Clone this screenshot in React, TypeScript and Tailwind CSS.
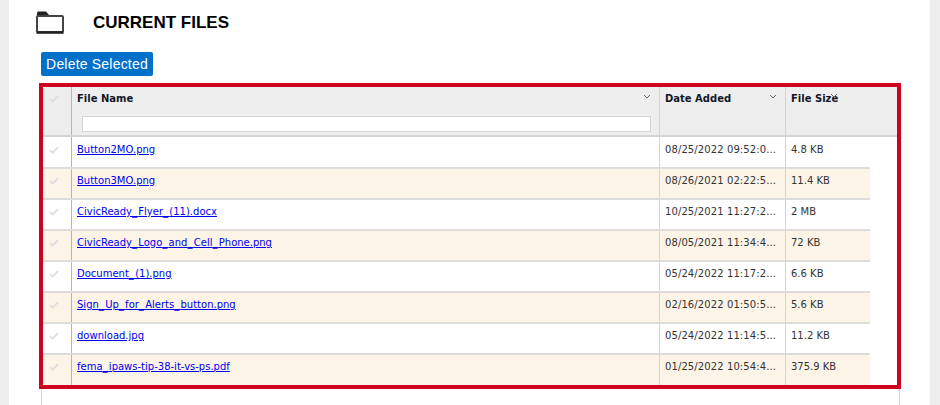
const files = [
  { name: "Button2MO.png", date: "08/25/2022 09:52:0...", size: "4.8 KB" },
  { name: "Button3MO.png", date: "08/26/2021 02:22:5...", size: "11.4 KB" },
  { name: "CivicReady_Flyer_(11).docx", date: "10/25/2021 11:27:2...", size: "2 MB" },
  { name: "CivicReady_Logo_and_Cell_Phone.png", date: "08/05/2021 11:34:4...", size: "72 KB" },
  { name: "Document_(1).png", date: "05/24/2022 11:17:2...", size: "6.6 KB" },
  { name: "Sign_Up_for_Alerts_button.png", date: "02/16/2022 01:50:5...", size: "5.6 KB" },
  { name: "download.jpg", date: "05/24/2022 11:14:5...", size: "11.2 KB" },
  { name: "fema_ipaws-tip-38-it-vs-ps.pdf", date: "01/25/2022 10:54:4...", size: "375.9 KB" },
];

function Check() {
  return (
    <svg width="10" height="8" viewBox="0 0 10 8" fill="none">
      <path d="M1 4.2 3.6 6.6 9 1.2" stroke="#dddddd" strokeWidth="1.8" />
    </svg>
  );
}

function Chevron() {
  return (
    <svg width="8" height="5" viewBox="0 0 8 5" fill="none">
      <path d="M1 1 4 4 7 1" stroke="#666" strokeWidth="1" />
    </svg>
  );
}

function FolderIcon() {
  return (
    <svg width="28" height="23" viewBox="0 0 28 23" fill="none">
      <path d="M1 4.5V2a1.5 1.5 0 0 1 1.5-1.5H10l3 3.5v1.5H1Z" fill="#222222" />
      <rect x="1" y="5" width="26" height="16" rx="1" stroke="#444444" strokeWidth="2" />
      <path d="M0.5 21.5h27" stroke="#222222" strokeWidth="2.6" />
    </svg>
  );
}

// underscores are wider in the original font
function FileName({ name }: { name: string }) {
  const parts = name.split("_");
  return (
    <>
      {parts.map((p, i) => (
        <span key={i}>
          {p}
          {i < parts.length - 1 && <span className="tracking-[1.3px]">_</span>}
        </span>
      ))}
    </>
  );
}

export default function App() {
  return (
    <div className="h-[405px] w-[940px] overflow-hidden bg-[#eeeeee] font-['DejaVu_Sans',sans-serif]">
      <div className="ml-[9px] h-full w-[921px] bg-white pl-[26px]">
        <div className="flex h-[52px] items-start">
          <div className="mt-[11px] ml-[1px]">
            <FolderIcon />
          </div>
          <h1 className="mt-[13px] ml-[29px] font-['Liberation_Sans',sans-serif] text-[17px] leading-[19px] font-bold text-black">
            CURRENT FILES
          </h1>
        </div>

        <button className="ml-[6px] block h-[24px] w-[112px] rounded-[2px] bg-[#0070c9] text-center font-['Liberation_Sans',sans-serif] text-[14px] tracking-[0.2px] text-white">
          Delete Selected
        </button>

        <div className="mt-[7px] ml-[4px] h-[306px] w-[862px] border-4 border-[#d00021] bg-white">
          <div className="flex h-[50px] border-b-2 border-[#d4d4d4] bg-[#eeeeee] text-[10px] font-bold text-[#111827]">
            <div className="w-[29px] border-r border-[#b5b5b5] pt-[8px] pl-[6px]">
              <Check />
            </div>
            <div className="w-[588px] border-r border-[#d4d4d4] pt-[6px] pr-[8px] pl-[5px]">
              <div className="flex items-start justify-between leading-[12px]">
                <span>File Name</span>
                <span className="mt-[1px]">
                  <Chevron />
                </span>
              </div>
              <input className="mt-[11px] ml-[5px] block h-[16px] w-[569px] border border-[#d4d4d4] bg-white" />
            </div>
            <div className="w-[126px] border-r border-[#d4d4d4] pt-[6px] pr-[8px] pl-[5px]">
              <div className="flex items-start justify-between leading-[12px]">
                <span>Date Added</span>
                <span className="mt-[1px]">
                  <Chevron />
                </span>
              </div>
            </div>
            <div className="relative flex-1 pt-[6px] pl-[5px] leading-[12px]">
              <span>File Size</span>
              <span className="absolute top-[6px] left-[44px]">
                <Chevron />
              </span>
            </div>
          </div>

          {files.map((f, i) => {
            const first = i === 0;
            const last = i === files.length - 1;
            return (
              <div
                key={f.name}
                className={`flex w-[827px] text-[10px] leading-[13px] text-[#333333] ${
                  i % 2 === 1 ? "bg-[#fdf4e8]" : "bg-white"
                } ${first ? "h-[30px]" : "border-t-2 border-[#dcdcdc]"} ${
                  last ? "h-[32px]" : first ? "" : "h-[31px]"
                }`}
              >
                <div
                  className={`w-[29px] border-r border-[#b5b5b5] pl-[6px] ${
                    first ? "pt-[9px]" : "pt-[8px]"
                  }`}
                >
                  <Check />
                </div>
                <div
                  className={`w-[588px] border-r border-[#d4d4d4] pl-[5px] ${
                    first ? "pt-[6px]" : "pt-[5px]"
                  }`}
                >
                  <a href="#" className="text-[#0000ee] underline">
                    <FileName name={f.name} />
                  </a>
                </div>
                <div
                  className={`w-[126px] border-r border-[#d4d4d4] pl-[5px] tracking-[0.1px] ${
                    first ? "pt-[6px]" : "pt-[5px]"
                  }`}
                >
                  {f.date}
                </div>
                <div className={`pl-[5px] ${first ? "pt-[6px]" : "pt-[5px]"}`}>{f.size}</div>
              </div>
            );
          })}
        </div>

        <div className="ml-[6px] h-[20px] w-[859px] border-x border-[#d4d4d4]" />
      </div>
    </div>
  );
}
